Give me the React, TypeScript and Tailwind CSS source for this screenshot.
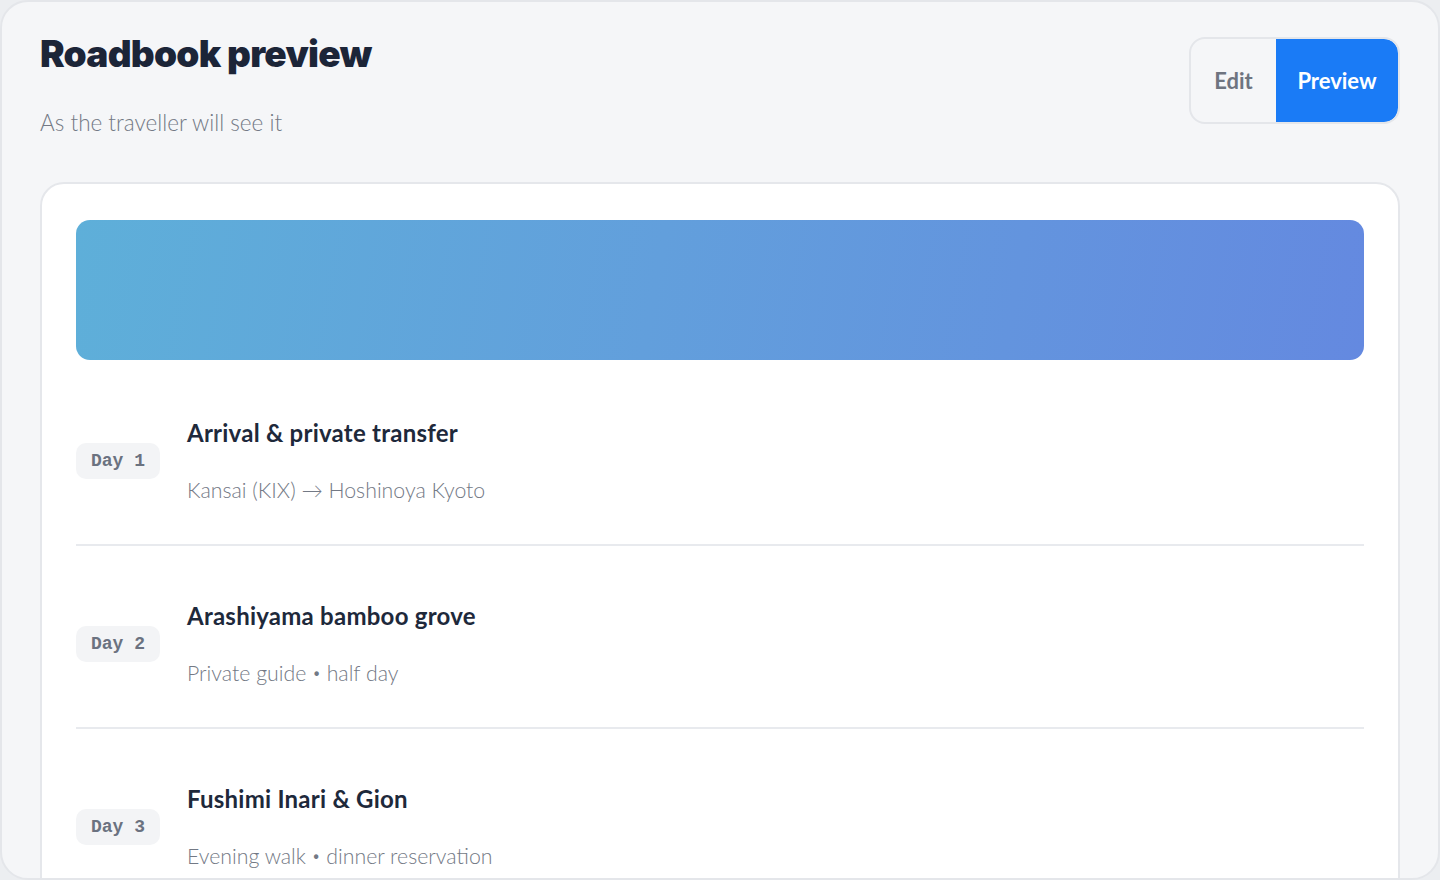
import React from "react";

const rows = [
  { day: "Day 1", title: "Arrival & private transfer", sub: ["Kansai (KIX) → Hoshinoya Kyoto"] },
  { day: "Day 2", title: "Arashiyama bamboo grove", sub: ["Private guide", "half day"] },
  { day: "Day 3", title: "Fushimi Inari & Gion", sub: ["Evening walk", "dinner reservation"] },
];

export default function App() {
  return (
    <div className="bg-[#eceef1] w-[1440px] h-[880px]">
      <div
        className="h-[880px] overflow-hidden rounded-[28px] border-2 border-[#e4e6ea] bg-[#f5f6f8] pl-[38px] pr-[38px] pt-[30px]"
        style={{ fontFamily: "Lato, 'Noto Sans', sans-serif" }}
      >
        <div className="flex items-start justify-between">
          <div>
            <h1
              className="text-[37px] leading-[44px] font-black tracking-[-0.02em] text-[#1c2538]"
              style={{ fontFamily: "Inter, sans-serif" }}
            >
              Roadbook preview
            </h1>
            <p className="mt-[34px] text-[22.5px] leading-[26px] font-light text-[#737985]">
              As the traveller will see it
            </p>
          </div>
          <div className="mt-[5px] flex h-[87px] overflow-hidden rounded-[16px] border-2 border-[#e4e6ea]">
            <div className="flex w-[85px] items-center justify-center text-[22px] font-bold text-[#6e7480]">
              Edit
            </div>
            <div className="flex w-[122px] items-center justify-center rounded-r-[14px] bg-[#1a7bf6] text-[22px] font-bold text-white">
              Preview
            </div>
          </div>
        </div>

        <div className="mt-[46px] rounded-[24px] border-2 border-[#e5e7eb] bg-white px-[34px] pt-[36px] pb-[40px]">
          <div className="mb-[3px] h-[140px] rounded-[14px] bg-[linear-gradient(100deg,#5eafd9_0%,#629fdc_45%,#6489e0_100%)]" />
          {rows.map((r) => (
            <div
              key={r.day}
              className="flex items-center gap-[27px] border-b-2 border-[#e8eaee] pt-[54px] pb-[39px]"
            >
              <div
                className="flex h-[36px] w-[84px] items-center justify-center rounded-[10px] bg-[#f3f4f6] text-[18px] font-bold text-[#6b7280]"
                style={{ fontFamily: "'Liberation Mono', 'Courier New', monospace" }}
              >
                {r.day}
              </div>
              <div>
                <div className="text-[24px] leading-[32px] font-bold tracking-[0.01em] text-[#1e293b]">
                  {r.title}
                </div>
                <div className="mt-[26px] h-[30px] text-[21.3px] leading-[30px] font-light text-[#737985]">
                  {r.sub.length === 1 ? (
                    r.sub[0]
                  ) : (
                    <>
                      {r.sub[0]} <span className="text-[15px] leading-none align-[3px]">•</span> {r.sub[1]}
                    </>
                  )}
                </div>
              </div>
            </div>
          ))}
        </div>
      </div>
    </div>
  );
}
